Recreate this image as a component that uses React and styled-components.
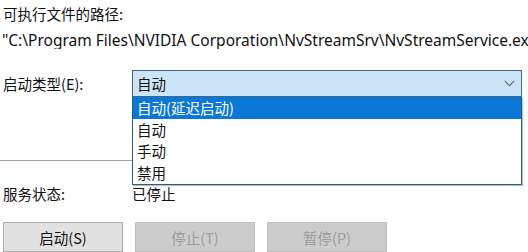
import React from 'react';
import styled, { createGlobalStyle } from 'styled-components';

const GlobalStyle = createGlobalStyle`
  html, body {
    margin: 0;
    padding: 0;
    background: #ffffff;
  }
  body {
    font-family: "Noto Sans", "Noto Sans CJK SC", sans-serif;
    font-size: 15px;
    color: #111;
    overflow: hidden;
  }
`;

const cjk = `"Noto Sans CJK SC", sans-serif`;

const Page = styled.div`
  width: 528px;
  height: 252px;
  overflow: hidden;
  display: flex;
  flex-direction: column;
`;

const Caption = styled.div`
  margin: 4px 0 0 3px;
  height: 20px;
  line-height: 20px;
  font-family: ${cjk};
  font-size: 14.5px;
`;

const PathLine = styled.div`
  margin: 6px 0 0 2px;
  height: 20px;
  line-height: 20px;
  white-space: nowrap;
  overflow: hidden;
  font-size: 15.5px;
`;

const Row = styled.div`
  display: flex;
  align-items: center;
  margin-top: ${p => p.$top}px;
  height: ${p => p.$height}px;
`;

const Label = styled.div`
  width: 132px;
  padding-left: 3px;
  flex-shrink: 0;
  box-sizing: border-box;
  font-family: ${cjk};
  font-size: 14.5px;
`;

const Value = styled.div`
  font-family: ${cjk};
  font-size: 14.5px;
`;

const ComboWrap = styled.div`
  position: relative;
  width: 390px;
  height: 100%;
`;

const Combo = styled.div`
  box-sizing: border-box;
  height: 100%;
  background: #cce4f7;
  border: 1px solid #3f6886;
  display: flex;
  align-items: center;
  justify-content: space-between;
  padding: 0 6px 0 4px;
  font-family: ${cjk};
  font-size: 14.5px;
`;

const DropList = styled.ul`
  position: absolute;
  top: 100%;
  left: 0;
  width: 390px;
  box-sizing: border-box;
  margin: 0;
  padding: 0;
  list-style: none;
  background: #fff;
  border: 1px solid #2f5f6e;
  border-top: none;
  box-shadow: 1px 1px 1px rgba(80, 120, 140, 0.45);
  z-index: 2;
`;

const DropItem = styled.li`
  height: ${p => p.$h}px;
  line-height: ${p => p.$h}px;
  padding-left: 4px;
  font-family: ${cjk};
  font-size: 14.5px;
  background: ${p => (p.$active ? '#0b78d8' : 'transparent')};
  color: ${p => (p.$active ? '#ffffff' : '#111')};
`;

const Separator = styled.div`
  margin-top: 63px;
  width: 132px;
  height: 1px;
  background: #a0a0a0;
`;

const ButtonBar = styled.div`
  display: flex;
  gap: 12px;
  margin: 19px 0 0 3px;
`;

const Button = styled.button`
  width: 120px;
  height: 30px;
  padding: 0;
  box-sizing: border-box;
  font-family: ${cjk};
  font-size: 14.5px;
  background: ${p => (p.disabled ? '#cccccc' : '#e1e1e1')};
  border: 1px solid ${p => (p.disabled ? '#bfbfbf' : '#adadad')};
  color: ${p => (p.disabled ? '#9d9d9d' : '#111')};
  border-radius: 0;
`;

function Chevron() {
  return (
    <svg width="11" height="7" viewBox="0 0 11 7">
      <path d="M0.8 0.8 L5.5 5.6 L10.2 0.8" fill="none" stroke="#6b6b6b" strokeWidth="1.2" />
    </svg>
  );
}

const options = [
  { text: '自动(延迟启动)', h: 22 },
  { text: '自动', h: 21 },
  { text: '手动', h: 22 },
  { text: '禁用', h: 22 },
];

export default function App() {
  return (
    <>
      <GlobalStyle />
      <Page>
        <Caption>可执行文件的路径:</Caption>
        <PathLine>"C:\Program Files\NVIDIA Corporation\NvStreamSrv\NvStreamService.exe"</PathLine>

        <Row $top={21} $height={29}>
          <Label>启动类型(E):</Label>
          <ComboWrap>
            <Combo>
              <span>自动</span>
              <Chevron />
            </Combo>
            <DropList>
              {options.map((o, i) => (
                <DropItem key={o.text} $h={o.h} $active={i === 0}>{o.text}</DropItem>
              ))}
            </DropList>
          </ComboWrap>
        </Row>

        <Separator />

        <Row $top={22} $height={20}>
          <Label>服务状态:</Label>
          <Value>已停止</Value>
        </Row>

        <ButtonBar>
          <Button>启动(S)</Button>
          <Button disabled>停止(T)</Button>
          <Button disabled>暂停(P)</Button>
        </ButtonBar>
      </Page>
    </>
  );
}
